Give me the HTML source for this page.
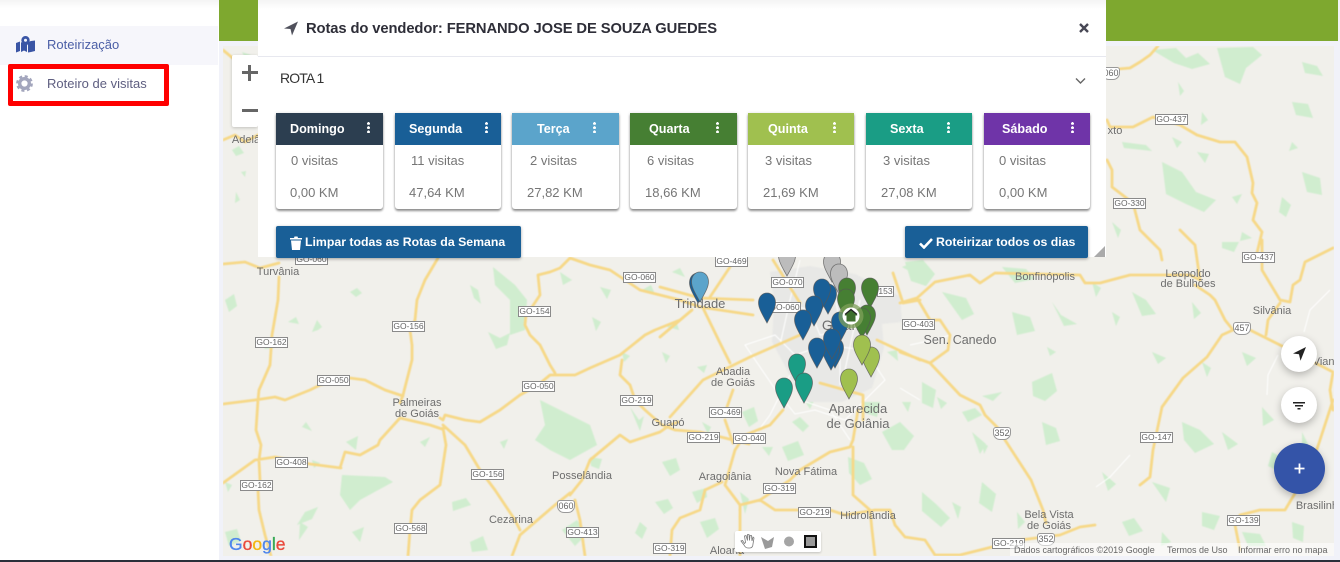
<!DOCTYPE html>
<html lang="pt"><head><meta charset="utf-8"><title>Rotas</title>
<style>
*{box-sizing:border-box}
html,body{margin:0;padding:0;width:1340px;height:562px;overflow:hidden;background:#f1f2f9;font-family:"Liberation Sans",sans-serif}
.a{position:absolute;white-space:nowrap}
#side{position:absolute;left:0;top:0;width:219px;height:562px;background:#fff}
#top{position:absolute;left:219px;top:0;width:1119px;height:41px;background:#7ea82f}
#map{position:absolute;left:223px;top:46px;width:1111px;height:510px;background:#f1f0eb;overflow:hidden}
#map svg.m{position:absolute;left:0;top:0;filter:blur(.5px)}
.s{position:absolute;height:11px;width:33px;background:#fff;border:1px solid #8a8a8a;font:normal 8.500px/9px "Liberation Sans",sans-serif;color:#666;text-align:center;white-space:nowrap;overflow:hidden}
.h{width:18px;height:13px;border-radius:3px 3px 7px 7px;border-color:#999;font-size:9px;line-height:11px}
.p{position:absolute;color:#6e6e6e;font:11px/12px "Liberation Sans",sans-serif;text-align:center;white-space:nowrap;transform:translateX(-50%)}
#panel{position:absolute;left:258px;top:0;width:848px;height:257px;background:#fff}
.card{position:absolute;top:113px;height:96px;background:#fff;border-radius:0 0 3px 3px;box-shadow:0 2px 2px rgba(0,0,0,.42),0 0 3px rgba(0,0,0,.12)}
.hd{position:absolute;left:0;top:0;width:100%;height:32px}
.t{position:absolute;color:#fff;font:bold 12.600px/16px "Liberation Sans",sans-serif;top:121px;white-space:nowrap}
.v{position:absolute;color:#767676;font:13px/16px "Liberation Sans",sans-serif;top:153px;white-space:nowrap}
.k{position:absolute;color:#767676;font:13px/16px "Liberation Sans",sans-serif;top:185px;white-space:nowrap}
.d{position:absolute;top:122px;width:3px;height:11px;background:radial-gradient(circle at 1.5px 1.5px,#fff 1.4px,transparent 1.5px) 0 0/3px 4.2px}
.b{position:absolute;top:226px;height:32px;background:#195f97;border-radius:2px;box-shadow:0 1px 3px rgba(0,0,0,.35);color:#fff;font:bold 12.300px/32px "Liberation Sans",sans-serif;white-space:nowrap}
.fab{position:absolute;border-radius:50%;background:#fff;box-shadow:0 3px 8px rgba(0,0,0,.25)}
</style></head>
<body>
<div id="side">
  <div class="a" style="left:0;top:0;width:219px;height:8px;background:linear-gradient(#f4f4f4,#fff)"></div>
  <div class="a" style="left:0;top:26px;width:218px;height:39px;background:#f6f6fb"></div>
  <svg class="a" style="left:16px;top:36px" width="19" height="17" viewBox="0 0 19 17"><path d="M0 7l4-1.500v9.500L0 16.500zM5 6l3 2 3-2v10l-3-1.500L5 16zM12 6l3-1 4-0.500v10.500L15 16l-3 .500z" fill="#3a55a5"/><path d="M9.500 0a4.200 4.200 0 0 0-4.200 4.200c0 2.600 4.200 6.800 4.200 6.800s4.200-4.200 4.200-6.800A4.200 4.200 0 0 0 9.500 0z" fill="#3a55a5"/><circle cx="9.500" cy="4.200" r="1.500" fill="#f6f6fb"/></svg>
  <div class="a" style="left:47px;top:37px;font-size:13px;line-height:16px;color:#4a5ea6">Roteirização</div>
  <svg class="a" style="left:16px;top:75px" width="17" height="17" viewBox="0 0 17 17"><circle cx="8.500" cy="8.500" r="4.800" fill="none" stroke="#a3a6bd" stroke-width="3.400"/><circle cx="8.500" cy="8.500" r="7.300" fill="none" stroke="#a3a6bd" stroke-width="2.200" stroke-dasharray="3.100 2.630"/></svg>
  <div class="a" style="left:47px;top:76px;font-size:13px;line-height:16px;color:#5e5e80">Roteiro de visitas</div>
  <div class="a" style="left:8px;top:64px;width:161px;height:42px;border:5px solid #ff0000;border-radius:2px"></div>
</div>
<div id="top"></div>
<div id="map">
<svg class="m" width="1111" height="510" viewBox="223 46 1111 510">
<g fill="#d0edcf">
<path d="M493 267l22 18 12 15-2 30-15 5 0-35-15-15zM540 400l20 10 30 15 7 20-27 15-20-10-15-10 10-15zM342 475l43 2 8 5-33 18-10 10-10-15z"/>
<path d="M225 300l9-6 3 12-8 6zM262 342l8-4 4 10-9 1zM232 150l7-4 5 7-8 3zM288 322l8-5 3 7zM318 330l-6 2 5-12 5 7zM350 292l7-4 5 5-6 4zM470 285l8 5 3 14-7-6zM488 332l12 6 10-5-3 12-11 4zM560 272l12 8-9 5zM600 287l11 3-4 9zM592 317l9 5-5 9zM642 290l9-5 4 9zM622 352l8 4-6 6z"/>
<path d="M590 457l12 2-3 10-8-3zM452 502l14-4 5 7-18 6zM305 512l13-5-6 12-15 6zM562 530l15-10 10 14-12 12zM470 542l13-6 5 14-16 2zM640 522l7 6-5 11-7-6zM500 442l8-3-4 10zM420 442l10-5-5 10zM346 442l12-6-2 14zM302 427l4-5 6 9zM312 460l8 3-6 5z"/>
<path d="M225 482l7 3-4 7zM225 532l12-3 4 12-12 5zM300 522l8 5-9 13zM352 532l12-5-4 15zM630 407l9 13 5-4-4 15zM655 502l13-3 5 9-9 6zM700 522l15-4 4 11-12 9zM740 492l9 7-4 15zM782 447l16-6 6 14-16 6zM848 457l16 6 8 16-12 6-11-12zM882 432l18-10 14 14-10 14-12 0zM922 492l14 12 14 14-9 9-19-16zM982 482l14 12-4 18-13-9zM962 412l13-4 7 7-14 7zM1002 392l-9 9-11-5zM1042 422l14 6 4 13-14 4z"/>
<path d="M905 262l18-2 12 14-9 12-15-5zM882 302l14 4-5 12zM942 292l24 6 8 16-12 6zM1012 312l18 5 5 14-18 4zM1052 302l9 13 16 9-13 2zM1032 382l20-9 5 18-12 10-12-5zM922 382l14 8-3 18-11-5zM1002 267l24 2 9 10-20 4zM1092 282l9 6-5 9zM1132 292l14 8 10 14-14 2zM1112 312l8 5-4 9zM1152 352l14 6-8 6zM1192 302l9 11-7 6zM1202 362l9 6-4 9zM1242 352l14 6-9 8zM1222 432l16 12-10 6zM1182 422l18 8 14 14-19 9-11-13zM1152 482l18 6-4 14zM1262 407l12 13-11 6zM1272 452l14 8-6 12-12-6zM1202 512l18 4-6 14-12-4zM1102 472l14 12-8 7zM1122 522l12-4 9 13-14 5zM1242 532l18 2 6 12-18 0zM1292 522l12 4-1 16-10-4zM1302 432l6 12-6 5zM1162 532l9 10-10 4z"/>
<path d="M1152 50l24-2 10 10 12-5 12 11-18 5-18-6zM1217 48l36-1 9 8-16 13-6 16-15-7zM1302 62l15 4 6 10-18-3zM1178 82l6 9-4 5zM1202 112l6 8-7 5zM1292 102l16 2 5 14-17-3zM1302 172l18 6 2 17-15-3zM1232 197l10-3-5 10zM1162 162l20 10 14 20 20 8-12 12-18-8-20-10zM1172 137l10 5-5 6zM1197 152l12 2-4 9zM1282 197l9 8-5 12-7-5zM1242 232l10 6-12 3zM1292 142l6 6-9 3zM1122 142l24 3 6 6-28-3zM1112 222l9 8-3 8zM1222 242l17 0-5 10-12-4z"/>
<path d="M662 462l14-4 4 12-10 6zM742 412l12-5 4 14-9 6zM692 492l14-4 1 9-10 6zM702 422l9 5-3 7zM802 397l12 4-4 8zM937 397l10 6-6 6zM982 442l6 4-4 8zM862 402l18 0-3 15-12-4zM972 432l14 12-6 10zM952 502l9 5-3 12zM1017 512l8 10-7 7zM662 352l8 4-4 7zM667 327l9-7 3 10zM697 367l10-2-3 8z"/>
<path d="M672 272l8-4 5 9zM792 422l8-5 9 9-6 6zM762 447l11 0-4 9zM887 352l10-2 1 11zM902 402l9 0-3 10zM902 267l12-5-3 10zM242 52l9 3-5 5zM1047 347l9 5-6 4zM236 192l4 8-5 3zM241 172l5-1-1 6zM271 152l-3 5 5 3z"/>
</g>
<g fill="#e8e8e6"><path d="M770 272l40-6 45 8 45 22 2 26-20 2 2 24-12 40-30 14-40 0-16-34-14-26 2-40z"/></g>
<g fill="none" stroke="#fff" stroke-width="1"><path d="M745 345l30-10 20 20 30-10 40 5 20 30-40 40-30-10-20 4-20-25zM770 300l40 10 10 25 50-10M800 260l-10 40-10 45M830 265l10 60 0 60M860 300l-15 70M790 375l-20 40-15 20M800 400l30 10 20 30M910 345l28-6 12-4M920 400l-20-12M1130 455l-20 22-14 10M1330 290l-20 20-6 22M1278 355l-10 20-1 20"/></g>
<g fill="none" stroke="#f6d888" stroke-width="2.800" stroke-linejoin="round" stroke-linecap="round" id="r">
<path d="M223 264l22-2 15 6 19-5M279 277l-1 23-6 35-2 30-11 25-1 10-2 30 5 15-2 15 1 20-2 10 1 20 6 25 6 21M223 404l32-4 20-3 10 3 25-10 10-5 30-7 15 2 20 10 18 6M438 258l-13 22-8 20-2 20-5 10 2 15v15l-9 35-3 8M400 418l-20 22-2 5-18 10-15-3-5 16M223 483l32-23 20-3 35 7 31 4M400 418l30 7 12 4 3-1M440 418l3 2 2-5 20 5 15 2 20-12 20-15 18-10 12-10 25 0 15-7 30-13 25-20 10-5 25-10M555 373l-5-8-10-20-10-10-5-10 1-10 4-5 10-15-2-20 12-3 10-4 10-10 20 7 20 5 15 10 15 10 40 10 20 7 53 8M443 428l3 17-6 40-20 15-8 10-2 20-2 26M443 425l22 20 15 25 15 20 20 30 5 10M512 556l8-21 35-30 15-12M575 500l5 20 5 36M570 495l12-15 8-20 30-25 10 7 30-10 10-7 8-3M622 360l-2 15 10 10 5 15 10 10 17 15 13 5 25 2 25 6 24 6M783 410l-13 15-25 10-10 15-10 35 15 20v51M722 482l-17 8-5 20-20 8-8 12-2 26M740 505l20-5 30-20 10-10 30-18 20-5 3-7 5-30M853 447v48l17 15 2 20 3 26M760 500l15 10h25l30 0 15 5 30-5 15 0 5 15 10 12 20 3 10 15 25 0 40-10 20-5 40-5 20-8 15-2M733 390l-6 17M725 420l8 23M660 287l40 11 53 2M703 308l17 35 10 20M692 310l-32 27M730 267l-20 30M773 260l27 43M800 335l-50 22-47 23-33 37M820 383l43 12v25M877 340l43 20M893 273l10 30 17-3M900 303l17-5 13 22 10 0 10 15-2 15-18 13M917 298l18-16 35-7 10 8 15-10 85 2 5 8 15 0 30-8 60 0 10 5-5-35-15-15M900 352l30 11 30 32 20 10 5 10 15 15 5 10 13 20 13 20 12 30 3 13M1195 285l15 10 5 5 10 20 8 10h17l20 10 20 10 43 22-3 18 3 20M1233 330l-11 5-15 22-24 21-21 29-9 43-3 27-10 8M1262 240v30l18 30 10 2 3-17 7-5 5-18 28-14M1280 303l-12 17-2 15M1333 400l-13 40-10 30-13 20-12 20h-25l-20 5-5 10 5 25M1106 70l24-2 10-6 10-7 8-9M1107 160l5 10v17l21 16 7 27 20 20 2 10M1107 120l3 7h23l20-10 27 8 17 10 23 7h15l12 15 6 26-1 10 5 10-4 17 9 12-5 21M223 50l12 10M223 140l12-5 10 7 13-7"/>
</g>
</svg>
<div style="position:absolute;left:-223px;top:-46px;width:1340px;height:562px">
<span class="p" style="left:278px;top:266px">Turvânia</span><span class="p" style="left:246px;top:134px">Adelâ</span><span class="p" style="left:417px;top:397px;font-size:11px">Palmeiras</span><span class="p" style="left:417px;top:408px">de Goiás</span><span class="p" style="left:668px;top:417px">Guapó</span><span class="p" style="left:582px;top:470px">Posselândia</span><span class="p" style="left:511px;top:514px">Cezarina</span><span class="p" style="left:725px;top:471px">Aragoiânia</span><span class="p" style="left:806px;top:466px">Nova Fátima</span><span class="p" style="left:868px;top:510px">Hidrolândia</span><span class="p" style="left:1049px;top:509px">Bela Vista</span><span class="p" style="left:1049px;top:520px">de Goiás</span><span class="p" style="left:727px;top:545px">Aloana</span><span class="p" style="left:700px;top:297px;font-size:13px;line-height:14px">Trindade</span><span class="p" style="left:733px;top:366px">Abadia</span><span class="p" style="left:733px;top:377px">de Goiás</span><span class="p" style="left:858px;top:402px;font-size:13px;line-height:14px">Aparecida</span><span class="p" style="left:858px;top:417px;font-size:13px;line-height:14px">de Goiânia</span><span class="p" style="left:960px;top:333px;font-size:12.500px;line-height:14px">Sen. Canedo</span><span class="p" style="left:1045px;top:271px">Bonfinópolis</span><span class="p" style="left:1188px;top:268px">Leopoldo</span><span class="p" style="left:1188px;top:278px">de Bulhões</span><span class="p" style="left:1272px;top:305px">Silvânia</span><span class="p" style="left:1338px;top:356px">Vianópolis</span><span class="p" style="left:1320px;top:500px">Brasilinha</span><span class="p" style="left:1115px;top:125px">xto</span><span class="p" style="left:846px;top:318px;font-size:14px;line-height:15px">Goiânia</span>
<b class="s" style="left:1155px;top:114px">GO-437</b><b class="s" style="left:1113px;top:198px">GO-330</b><b class="s" style="left:1242px;top:252px">GO-437</b><b class="s" style="left:295px;top:254px">GO-060</b><b class="s" style="left:715px;top:256px">GO-469</b><b class="s" style="left:623px;top:272px">GO-060</b><b class="s" style="left:771px;top:277px">GO-070</b><b class="s" style="left:768px;top:302px">GO-060</b><b class="s" style="left:877px;top:286px;width:17px">153</b><b class="s" style="left:902px;top:319px">GO-403</b><b class="s" style="left:518px;top:306px">GO-154</b><b class="s" style="left:392px;top:321px">GO-156</b><b class="s" style="left:255px;top:337px">GO-162</b><b class="s" style="left:317px;top:375px">GO-050</b><b class="s" style="left:522px;top:381px">GO-050</b><b class="s" style="left:620px;top:395px">GO-219</b><b class="s" style="left:275px;top:457px">GO-408</b><b class="s" style="left:240px;top:480px">GO-162</b><b class="s" style="left:471px;top:469px">GO-156</b><b class="s" style="left:566px;top:527px">GO-413</b><b class="s" style="left:394px;top:523px">GO-568</b><b class="s" style="left:653px;top:543px">GO-319</b><b class="s" style="left:709px;top:407px">GO-469</b><b class="s" style="left:687px;top:432px">GO-219</b><b class="s" style="left:733px;top:433px">GO-040</b><b class="s" style="left:763px;top:483px">GO-319</b><b class="s" style="left:798px;top:507px">GO-219</b><b class="s" style="left:992px;top:538px">GO-219</b><b class="s" style="left:1140px;top:432px">GO-147</b><b class="s" style="left:1227px;top:515px">GO-139</b>
<b class="s h" style="left:557px;top:500px">060</b><b class="s h" style="left:993px;top:427px">352</b><b class="s h" style="left:1037px;top:533px">352</b><b class="s h" style="left:1233px;top:322px">457</b><b class="s h" style="left:1102px;top:67px">060</b>
</div>
<svg class="m" style="filter:blur(.25px)" width="1111" height="510" viewBox="223 46 1111 510">
<defs><path id="pin" d="M0 0C5 0 8.500 4 8.500 10C8.500 16 3 24 0 30C-3 24-8.500 16-8.500 10C-8.500 4-5 0 0 0Z"/></defs>
<g stroke="#555" stroke-opacity=".75" stroke-width=".8">
<g fill="#bcbcbc"><use href="#pin" x="787" y="246"/><use href="#pin" x="832" y="252"/><use href="#pin" x="839" y="264"/></g>
<g fill="#195f97"><use href="#pin" x="698" y="273"/></g><g fill="#5ba4cb"><use href="#pin" x="700" y="272"/></g>
<g fill="#195f97"><use href="#pin" x="767" y="293"/><use href="#pin" x="828" y="284"/><use href="#pin" x="822" y="279"/><use href="#pin" x="814" y="296"/><use href="#pin" x="803" y="310"/><use href="#pin" x="840" y="312"/><use href="#pin" x="835" y="338"/><use href="#pin" x="831" y="340"/><use href="#pin" x="817" y="338"/><use href="#pin" x="832" y="329"/></g>
<g fill="#467f33"><use href="#pin" x="847" y="278"/><use href="#pin" x="870" y="278"/><use href="#pin" x="846" y="289"/><use href="#pin" x="867" y="305"/><use href="#pin" x="862" y="308"/></g>
<g fill="#a0c04f"><use href="#pin" x="871" y="347"/><use href="#pin" x="862" y="335"/><use href="#pin" x="849" y="369"/></g>
<g fill="#1a9d85"><use href="#pin" x="797" y="354"/><use href="#pin" x="804" y="373"/><use href="#pin" x="784" y="378"/></g>
</g>
<circle cx="851" cy="316" r="12.500" fill="#7fa05a" fill-opacity=".75"/><circle cx="851" cy="316" r="8.500" fill="#fff"/>
<path d="M851 309.500l-6.500 6h2v6h9v-6h2z" fill="#3d6e2c"/><path d="M845 314.500l6-5 6 5" fill="none" stroke="#222" stroke-width="1.300"/>
</svg>
<div class="a" style="left:9px;top:9px;width:26px;height:72px;background:#fff;border-radius:2px;box-shadow:0 1px 3px rgba(0,0,0,.2)"></div>
<div class="a" style="left:19px;top:25px;width:16px;height:3px;background:#666"></div><div class="a" style="left:25px;top:19px;width:3px;height:16px;background:#666"></div>
<div class="a" style="left:19px;top:63px;width:16px;height:3px;background:#666"></div>
<div class="a" style="left:6px;top:487px;font:17.500px/22px 'Liberation Sans',sans-serif;-webkit-text-stroke:.35px"><span style="color:#4f86ec">G</span><span style="color:#e9493c">o</span><span style="color:#f4b611">o</span><span style="color:#4f86ec">g</span><span style="color:#35a853">l</span><span style="color:#e9493c">e</span></div>
<div class="a" style="left:512px;top:485px;width:86px;height:21px;background:#fff;border-radius:2px;box-shadow:0 1px 2px rgba(0,0,0,.2)">
<svg width="86" height="21" viewBox="0 0 86 21"><path d="M6 10l3 4c1 2 2 3 4 3h2c2 0 3-2 3-4l1-6-1-1-1 4-.5-5.500-1.500 0-.5 5-.5-6-1.500 0 0 6-1.500-5-1.500.5 1 6.500-1 1-2-3z" fill="none" stroke="#777" stroke-width=".8"/><path d="M26 6l7 4 6-4-2 10-7 2z" fill="#9a9a9a"/><circle cx="54" cy="10.500" r="5" fill="#a5a5a5"/><rect x="70" y="5" width="11" height="11" fill="#999" stroke="#111" stroke-width="2"/></svg></div>
<div class="a" style="left:787px;top:497px;width:324px;height:13px;background:rgba(255,255,255,.55);color:#666;font:9px/14px 'Liberation Sans',sans-serif"><span class="a" style="left:4px">Dados cartográficos ©2019 Google</span><span class="a" style="left:157px">Termos de Uso</span><span class="a" style="left:228px">Informar erro no mapa</span></div>
</div>
<div class="fab" style="left:1281px;top:336px;width:36px;height:36px"><svg width="36" height="36"><path d="M25 11L12 17.500l6 .800 1.500 6.500z" fill="#222"/></svg></div>
<div class="fab" style="left:1281px;top:387px;width:36px;height:36px"><svg width="36" height="36"><path d="M12 15h12v1.500H12zM14 18h8v1.500h-8zM16.500 21h3v1.500h-3z" fill="#222"/></svg></div>
<div class="fab" style="left:1274px;top:443px;width:51px;height:51px;background:#3454a8"><svg width="51" height="51"><path d="M20.500 25.500h10M25.500 20.500v10" stroke="#fff" stroke-width="1.800"/></svg></div>

<div id="panel" style="background:linear-gradient(#f4f4f4,#fff 9px)"></div>
<div class="a" style="left:258px;top:56px;width:848px;height:1px;background:#e7e8ef"></div>
<svg class="a" style="left:283px;top:21px" width="16" height="15" viewBox="0 0 16 15"><path d="M15 0.500L1 7.500l6.500 .500 1.500 6.500z" fill="#50515c"/></svg>
<div class="a" style="left:306px;top:20px;font:bold 14.750px/18px 'Liberation Sans',sans-serif;color:#2e2e38;letter-spacing:-.1px">Rotas do vendedor: FERNANDO JOSE DE SOUZA GUEDES</div>
<svg class="a" style="left:1079px;top:23px" width="10" height="10"><path d="M1 1l8 8M9 1l-8 8" stroke="#484855" stroke-width="2.400"/></svg>
<div class="a" style="left:280px;top:70px;font:14px/17px 'Liberation Sans',sans-serif;color:#333;letter-spacing:-.9px">ROTA 1</div>
<svg class="a" style="left:1075px;top:77px" width="11" height="8"><path d="M1 1.500l4.500 4.500 4.500-4.500" fill="none" stroke="#666" stroke-width="1.400"/></svg>

<div class="card" style="left:276px;width:107px"><div class="hd" style="background:#2c3e50"></div></div>
<div class="card" style="left:395px;width:106px"><div class="hd" style="background:#195f97"></div></div>
<div class="card" style="left:512px;width:107px"><div class="hd" style="background:#5ba4cb"></div></div>
<div class="card" style="left:630px;width:107px"><div class="hd" style="background:#467f33"></div></div>
<div class="card" style="left:748px;width:106px"><div class="hd" style="background:#a0c04f"></div></div>
<div class="card" style="left:866px;width:106px"><div class="hd" style="background:#1a9d85"></div></div>
<div class="card" style="left:984px;width:106px"><div class="hd" style="background:#6f34a8"></div></div>

<span class="t" style="left:290px">Domingo</span><span class="t" style="left:409px">Segunda</span><span class="t" style="left:537px">Terça</span><span class="t" style="left:649px">Quarta</span><span class="t" style="left:768px">Quinta</span><span class="t" style="left:890px">Sexta</span><span class="t" style="left:1002px">Sábado</span>
<i class="d" style="left:367px"></i><i class="d" style="left:485px"></i><i class="d" style="left:593px"></i><i class="d" style="left:716px"></i><i class="d" style="left:833px"></i><i class="d" style="left:947px"></i><i class="d" style="left:1071px"></i>
<span class="v" style="left:291px">0 visitas</span><span class="v" style="left:411px">11 visitas</span><span class="v" style="left:530px">2 visitas</span><span class="v" style="left:647px">6 visitas</span><span class="v" style="left:765px">3 visitas</span><span class="v" style="left:883px">3 visitas</span><span class="v" style="left:999px">0 visitas</span>
<span class="k" style="left:290px">0,00 KM</span><span class="k" style="left:409px">47,64 KM</span><span class="k" style="left:527px">27,82 KM</span><span class="k" style="left:645px">18,66 KM</span><span class="k" style="left:763px">21,69 KM</span><span class="k" style="left:881px">27,08 KM</span><span class="k" style="left:999px">0,00 KM</span>

<div class="b" style="left:276px;width:245px"><svg class="a" style="left:14px;top:10px" width="12" height="14" viewBox="0 0 12 14"><path d="M0 2h4l.500-1.500h3L8 2h4v1.500H0zM1 4.500h10L10 14H2z" fill="#fff"/></svg><span class="a" style="left:29px">Limpar todas as Rotas da Semana</span></div>
<div class="b" style="left:905px;width:183px"><svg class="a" style="left:14px;top:11px" width="14" height="12" viewBox="0 0 14 12"><path d="M1 6.500l4 4 8-8.500" fill="none" stroke="#fff" stroke-width="2.600"/></svg><span class="a" style="left:31px">Roteirizar todos os dias</span></div>
<svg class="a" style="left:1094px;top:246px" width="11" height="11"><path d="M11 0v11H0z" fill="#aaa"/></svg>
<div class="a" style="left:0;top:560px;width:1340px;height:2px;background:#2a2f3a"></div>
</body></html>
